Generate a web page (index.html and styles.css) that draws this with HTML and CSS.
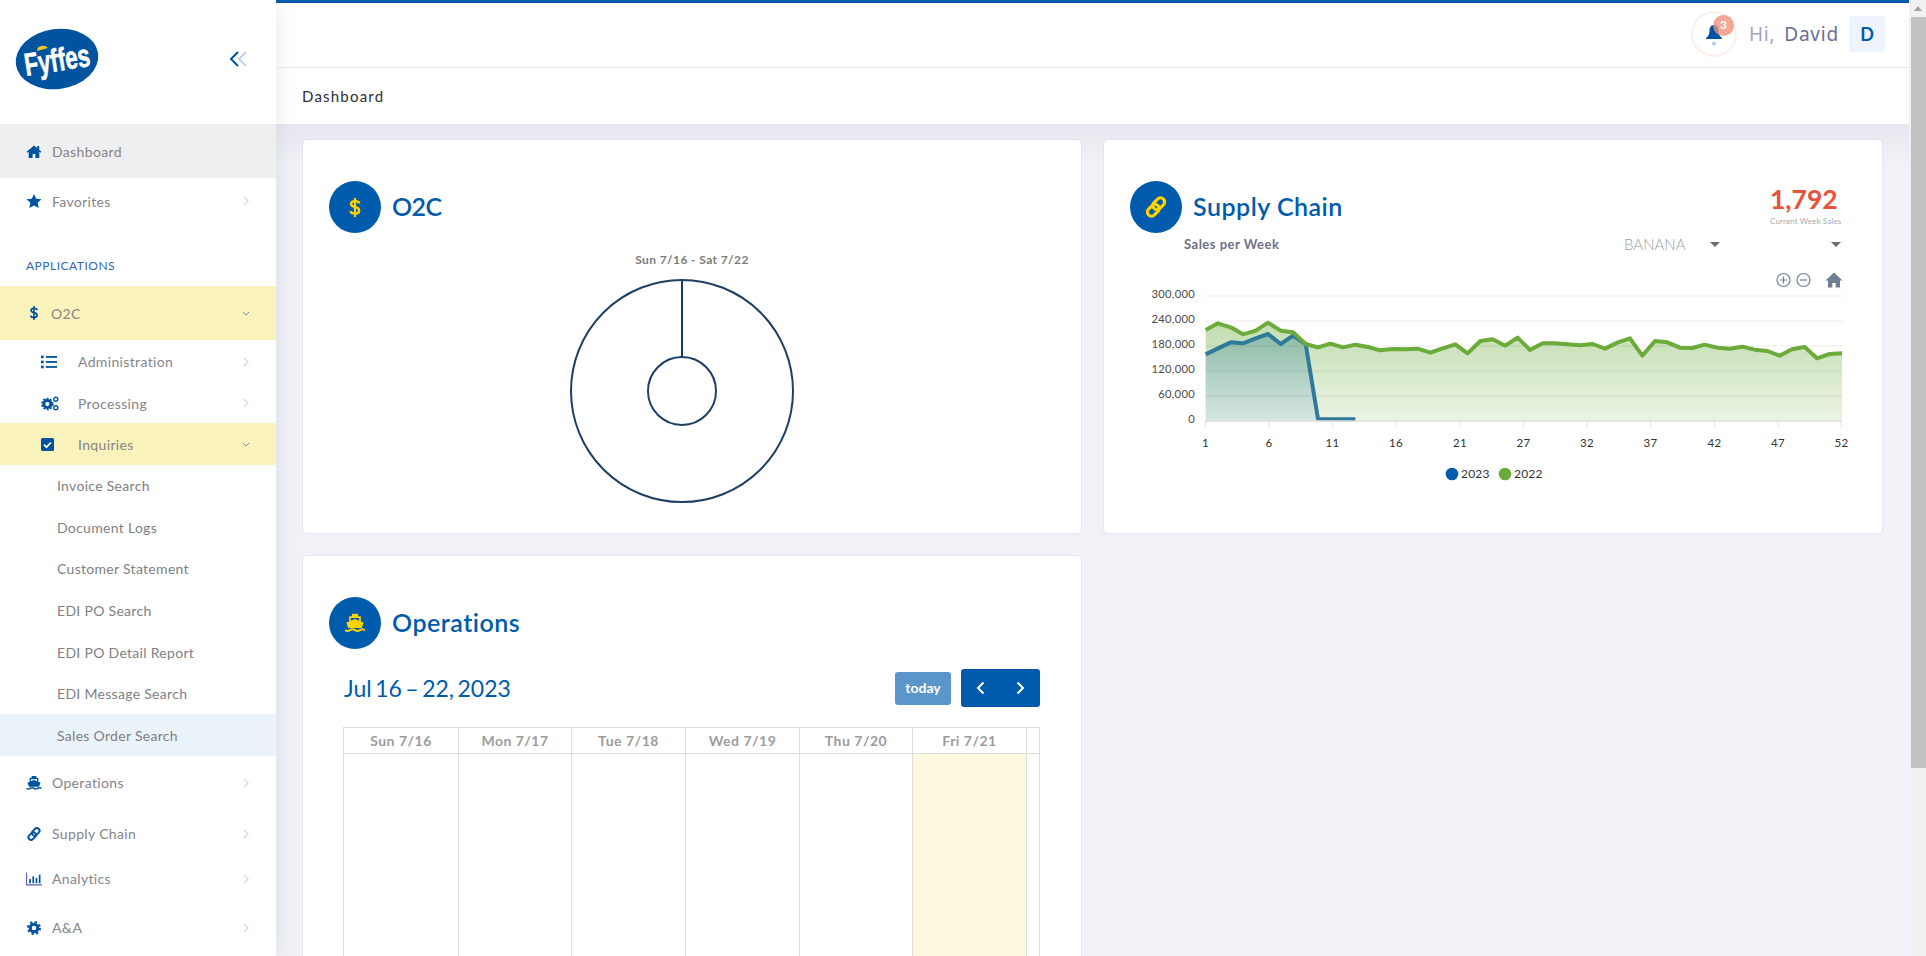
FILE: index.html
```html
<!DOCTYPE html>
<html lang="en">
<head>
<meta charset="utf-8">
<title>Dashboard</title>
<link rel="stylesheet" href="styles.css">
</head>
<body>
<svg class="defs" width="0" height="0" aria-hidden="true">
  <symbol id="i-home" viewBox="0 0 16 14"><path d="M8 .5 0 7.4l.9 1L2.3 7.3V14h4.2V9.6h3V14h4.2V7.3l1.4 1.1 .9-1L13.6 5.2V1.2h-2.2v2.1z" fill="currentColor"/></symbol>
  <symbol id="i-star" viewBox="0 0 16 15"><path d="M8 0l2.4 5 5.6.7-4.1 3.8 1.1 5.5L8 12.3 3 15l1.1-5.5L0 5.7 5.6 5z" fill="currentColor"/></symbol>
  <symbol id="i-link" viewBox="0 0 16 16"><g fill="none" stroke="currentColor" stroke-width="2.3"><rect x="-1.2" y="5" width="9.6" height="6" rx="3" transform="rotate(-45 3.6 8) translate(0 3.4)"/><rect x="7.6" y="5" width="9.6" height="6" rx="3" transform="rotate(-45 12.4 8) translate(0 -3.4)"/></g></symbol>
  <symbol id="i-ship" viewBox="0 0 16 15"><path d="M5.5 0h5v2h2.200v4.200L15 7.200 13.300 11.500H2.700L1 7.200l2.300-1V2h2.200zM4.700 3.400v2.200L8 4.300l3.300 1.300V3.400z" fill="currentColor"/><path d="M0 13.200q2 1.400 4 0t4 0 4 0 4 0" fill="none" stroke="currentColor" stroke-width="1.500"/></symbol>
  <symbol id="i-dollar" viewBox="0 0 10 16"><path d="M8.600 4.600C8.300 3.300 7 2.700 5 2.700 3 2.700 1.700 3.500 1.700 5 1.700 6.500 3 7 5 7.500c2.300.6 3.500 1.300 3.500 3 0 1.700-1.500 2.600-3.500 2.600S1.500 12.400 1.300 11" fill="none" stroke="currentColor" stroke-width="2"/><path d="M5 0v16" stroke="currentColor" stroke-width="1.800"/></symbol>
</svg>
<div class="app">
  <aside class="sidebar">
    <div class="brand">
      <svg class="logo" width="100" height="80" viewBox="-8 -8 100 80">
        <ellipse cx="42" cy="32" rx="41.500" ry="30" transform="rotate(-8 42 32)" fill="#00539f"/>
        <g transform="rotate(-9 42 32) translate(9 44) scale(.7 1)">
          <text class="logo-text" x="0" y="0">Fyffes</text>
        </g>
        <path d="M22 24a6 5 0 0 1 11-3z" fill="#f5c518"/>
      </svg>
      <svg class="collapse" width="18" height="16" viewBox="0 0 18 16">
        <path d="M9 1 2 8l7 7" fill="none" stroke="#00539f" stroke-width="2"/>
        <path d="M17 1 10 8l7 7" fill="none" stroke="#bcd2ea" stroke-width="2"/>
      </svg>
    </div>
    <nav class="nav">
      <a class="row row-dash is-grey"><svg class="ic ic-home"><use href="#i-home"/></svg><span>Dashboard</span></a>
      <a class="row row-fav"><svg class="ic ic-star"><use href="#i-star"/></svg><span>Favorites</span><svg class="chev" viewBox="0 0 8 10"><path d="M2 1l4 4-4 4"/></svg></a>
      <div class="section">APPLICATIONS</div>
      <a class="row row-o2c is-yellow"><svg class="ic ic-dollar"><use href="#i-dollar"/></svg><span>O2C</span><svg class="chev chev-down" viewBox="0 0 10 8"><path d="M1 2l4 4 4-4"/></svg></a>
      <a class="row sub row-admin">
        <svg class="ic" viewBox="0 0 15 12"><g fill="currentColor"><rect x="0" y="0" width="2.500" height="2.500"/><rect x="0" y="4.700" width="2.500" height="2.500"/><rect x="0" y="9.400" width="2.500" height="2.500"/><rect x="4.500" y=".4" width="10.500" height="1.700"/><rect x="4.500" y="5.100" width="10.500" height="1.700"/><rect x="4.500" y="9.800" width="10.500" height="1.700"/></g></svg>
        <span>Administration</span><svg class="chev" viewBox="0 0 8 10"><path d="M2 1l4 4-4 4"/></svg></a>
      <a class="row sub row-proc">
        <svg class="ic ic-cogs" viewBox="0 0 17 14"><g fill="none" stroke="currentColor"><circle cx="6" cy="7.500" r="3.400" stroke-width="2.800"/><circle cx="6" cy="7.500" r="5.200" stroke-width="1.400" stroke-dasharray="1.900 1.400"/><circle cx="14" cy="3" r="1.900" stroke-width="1.300"/><circle cx="14" cy="11" r="1.900" stroke-width="1.300"/></g></svg>
        <span>Processing</span><svg class="chev" viewBox="0 0 8 10"><path d="M2 1l4 4-4 4"/></svg></a>
      <a class="row sub row-inq is-yellow">
        <svg class="ic ic-check" viewBox="0 0 13 13"><rect width="13" height="13" rx="1.500" fill="currentColor"/><path d="M3 6.700l2.500 2.500L10 4.500" fill="none" stroke="#fff" stroke-width="1.800"/></svg>
        <span>Inquiries</span><svg class="chev chev-down" viewBox="0 0 10 8"><path d="M1 2l4 4 4-4"/></svg></a>
      <a class="leaf">Invoice Search</a>
      <a class="leaf">Document Logs</a>
      <a class="leaf">Customer Statement</a>
      <a class="leaf">EDI PO Search</a>
      <a class="leaf">EDI PO Detail Report</a>
      <a class="leaf">EDI Message Search</a>
      <a class="leaf is-active">Sales Order Search</a>
      <a class="row row-ops"><svg class="ic"><use href="#i-ship"/></svg><span>Operations</span><svg class="chev" viewBox="0 0 8 10"><path d="M2 1l4 4-4 4"/></svg></a>
      <a class="row row-sup"><svg class="ic"><use href="#i-link"/></svg><span>Supply Chain</span><svg class="chev" viewBox="0 0 8 10"><path d="M2 1l4 4-4 4"/></svg></a>
      <a class="row row-ana">
        <svg class="ic" viewBox="0 0 15 12"><path d="M.5 0v11.500H15" fill="none" stroke="#5a5fb0" stroke-width="1"/><g fill="currentColor"><rect x="3" y="6" width="1.600" height="4"/><rect x="6" y="3.500" width="1.600" height="6.500"/><rect x="9" y="5" width="1.600" height="5"/><rect x="12" y="2" width="1.600" height="8"/></g></svg>
        <span>Analytics</span><svg class="chev" viewBox="0 0 8 10"><path d="M2 1l4 4-4 4"/></svg></a>
      <a class="row row-aa">
        <svg class="ic" viewBox="0 0 14 14"><circle cx="7" cy="7" r="3.800" fill="none" stroke="currentColor" stroke-width="3"/><circle cx="7" cy="7" r="6" fill="none" stroke="currentColor" stroke-width="2" stroke-dasharray="2.400 2.300"/></svg>
        <span>A&amp;A</span><svg class="chev" viewBox="0 0 8 10"><path d="M2 1l4 4-4 4"/></svg></a>
    </nav>
  </aside>

  <div class="main">
    <header class="topbar">
      <div class="bell">
        <svg class="bell-icon" width="18" height="24" viewBox="0 0 18 24">
          <path d="M9 2C5.500 2 4.500 5 4.500 8c0 3.500-1.500 5.500-3.500 7v1h16v-1c-2-1.500-3.500-3.500-3.500-7C13.500 5 12.500 2 9 2z" fill="#00539f"/>
          <circle cx="9" cy="20.500" r="2" fill="#b5cdea"/>
        </svg>
        <span class="badge">3</span>
      </div>
      <div class="greeting"><span class="hi">Hi,</span> <span class="name">David</span></div>
      <div class="avatar">D</div>
    </header>
    <div class="crumbs">Dashboard</div>
    <div class="content">
      <section class="card card-o2c">
        <div class="head">
          <span class="disc"><svg class="disc-ic disc-dollar"><use href="#i-dollar"/></svg></span>
          <h2 class="h2-tight">O2C</h2>
        </div>
        <svg class="donut" width="727" height="262" viewBox="329 250 727 262">
          <text class="donut-title" x="692" y="264" text-anchor="middle">Sun 7/16 - Sat 7/22</text>
          <g fill="none" stroke="#1d3f66" stroke-width="2">
            <circle cx="682" cy="391" r="111"/>
            <circle cx="682" cy="391" r="34"/>
            <path d="M682 280v77"/>
          </g>
        </svg>
      </section>

      <section class="card card-sup">
        <div class="head head-sup">
          <span class="disc"><svg class="disc-ic disc-link"><use href="#i-link"/></svg></span>
          <h2>Supply Chain</h2>
          <div class="kpi">
            <div class="kpi-num">1,792</div>
            <div class="kpi-label">Current Week Sales</div>
          </div>
        </div>
        <div class="filters">
          <span class="filters-title">Sales per Week</span>
          <span class="select select-a">BANANA<i class="caret"></i></span>
          <i class="caret caret-b"></i>
        </div>
        <svg class="chart" width="778" height="222" viewBox="1104 265 778 222">
          <defs>
            <linearGradient id="gGreen" x1="0" y1="0" x2="0" y2="1">
              <stop offset="0" stop-color="#c2ddb0"/><stop offset="1" stop-color="#ebf4e4"/>
            </linearGradient>
            <linearGradient id="gBlue" x1="0" y1="0" x2="0" y2="1">
              <stop offset="0" stop-color="#2f7f90" stop-opacity=".38"/><stop offset="1" stop-color="#64a0c8" stop-opacity=".16"/>
            </linearGradient>
          </defs>
          <g class="tools">
            <circle cx="1783.500" cy="280" r="6.500"/><path d="M1780 280h7M1783.500 276.500v7"/>
            <circle cx="1803.500" cy="280" r="6.500"/><path d="M1800 280h7"/>
          </g>
          <path class="tool-home" d="M1834 272.500l-8.500 8h2.500v7h4.300v-4.500h3.400v4.500h4.300v-7h2.500z"/>
          <g transform="translate(1120 160) scale(.33333)">
            <path fill="url(#gGreen)" d="M257 510L294 490 332 502 369 523 407 512 444 488 482 512 519 517 557 552 594 562 631 551 669 562 706 554 744 561 781 571 819 567 856 568 893 566 931 578 968 565 1006 553 1043 580 1081 543 1118 538 1156 557 1193 533 1230 570 1268 550 1305 550 1343 553 1380 556 1418 552 1455 566 1492 548 1530 535 1567 587 1605 543 1642 547 1680 563 1717 564 1754 554 1792 563 1829 566 1867 560 1904 569 1942 573 1979 587 2016 568 2054 561 2091 595 2129 582 2166 580V785H257z"/>
            <path fill="url(#gBlue)" d="M257 583L294 565 332 547 369 550 407 535 444 522 482 552 519 527 557 552 594 777V785H257z"/>
          </g>
          <g class="grid-lines">
            <path d="M1205 296h637M1205 321h637M1205 346h637M1205 371h637M1205 396h637"/>
          </g>
          <g transform="translate(1120 160) scale(.33333)">
            <path class="line-blue" d="M257 583L294 565 332 547 369 550 407 535 444 522 482 552 519 527 557 552 594 777 631 778 669 778 706 778"/>
            <path class="line-green" d="M257 510L294 490 332 502 369 523 407 512 444 488 482 512 519 517 557 552 594 562 631 551 669 562 706 554 744 561 781 571 819 567 856 568 893 566 931 578 968 565 1006 553 1043 580 1081 543 1118 538 1156 557 1193 533 1230 570 1268 550 1305 550 1343 553 1380 556 1418 552 1455 566 1492 548 1530 535 1567 587 1605 543 1642 547 1680 563 1717 564 1754 554 1792 563 1829 566 1867 560 1904 569 1942 573 1979 587 2016 568 2054 561 2091 595 2129 582 2166 580"/>
          </g>
          <path class="axis" d="M1205 421h637"/>
          <path class="ticks" d="M1205.500 421v6M1269 421v6M1332.500 421v6M1396 421v6M1460 421v6M1523.500 421v6M1587 421v6M1650.500 421v6M1714.500 421v6M1778 421v6M1841.500 421v6"/>
          <g class="ylab">
            <text x="1195" y="298">300,000</text><text x="1195" y="323">240,000</text><text x="1195" y="348">180,000</text><text x="1195" y="373">120,000</text><text x="1195" y="398">60,000</text><text x="1195" y="423">0</text>
          </g>
          <g class="xlab">
            <text x="1205.500" y="447">1</text><text x="1269" y="447">6</text><text x="1332.500" y="447">11</text><text x="1396" y="447">16</text><text x="1460" y="447">21</text><text x="1523.500" y="447">27</text><text x="1587" y="447">32</text><text x="1650.500" y="447">37</text><text x="1714.500" y="447">42</text><text x="1778" y="447">47</text><text x="1841.500" y="447">52</text>
          </g>
          <circle cx="1452" cy="474" r="6.300" fill="#005bac"/><text class="leg" x="1461" y="478">2023</text>
          <circle cx="1505" cy="474" r="6.300" fill="#6aab3a"/><text class="leg" x="1514" y="478">2022</text>
        </svg>
      </section>

      <section class="card card-ops">
        <div class="head">
          <span class="disc"><svg class="disc-ic disc-ship"><use href="#i-ship"/></svg></span>
          <h2>Operations</h2>
        </div>
        <div class="cal">
          <div class="cal-bar">
            <div class="cal-range">Jul 16 – 22, 2023</div>
            <button class="btn-today">today</button>
            <div class="btn-nav">
              <svg width="10" height="14" viewBox="0 0 10 14"><path d="M7.500 1.500 2 7l5.500 5.500"/></svg>
              <svg width="10" height="14" viewBox="0 0 10 14"><path d="M2.500 1.500 8 7l-5.500 5.500"/></svg>
            </div>
          </div>
          <div class="cal-grid">
            <div class="th">Sun 7/16</div><div class="th">Mon 7/17</div><div class="th">Tue 7/18</div><div class="th">Wed 7/19</div><div class="th">Thu 7/20</div><div class="th">Fri 7/21</div><div class="th"></div>
            <div class="td"></div><div class="td"></div><div class="td"></div><div class="td"></div><div class="td"></div><div class="td is-today"></div><div class="td"></div>
          </div>
        </div>
      </section>
    </div>
  </div>

  <div class="scrollbar">
    <div class="sb-up"></div>
    <div class="sb-thumb"></div>
  </div>
</div>
</body>
</html>
```
FILE: styles.css
```css
* { box-sizing: border-box; }
html, body { margin: 0; height: 956px; overflow: hidden; }
body { font-family: Lato, "Open Sans", sans-serif; color: #85858a; background: #f0f2f7; }
.defs { position: absolute; }
.app { display: flex; height: 956px; overflow: hidden; }

/* sidebar */
.sidebar { width: 276px; flex: none; background: #fff; box-shadow: 0 0 24px rgba(70, 75, 120, .12); position: relative; z-index: 2; }
.brand { height: 124px; display: flex; align-items: flex-start; padding: 19px 0 0 7px; }
.logo { overflow: visible; }
.logo-text { font-family: "Liberation Sans", sans-serif; font-weight: 700; font-size: 32px; fill: #fff; stroke: #fff; stroke-width: .6px; }
.collapse { margin: 32px 0 0 122px; }
.nav { display: flex; flex-direction: column; }
.row { display: flex; align-items: center; padding-left: 26px; padding-right: 26px; font-size: 14px; letter-spacing: .35px; color: #85858a; }
.row > span { margin-left: 10px; }
.ic { width: 16px; height: 14px; flex: none; color: #00539f; }
.ic-home { height: 13px; }
.ic-dollar { height: 14px; }
.row-o2c > span { margin-left: 9px; }
.chev { width: 8px; height: 10px; margin-left: auto; fill: none; stroke: #cdd9f2; stroke-width: 1.200; }
.chev-down { width: 8px; height: 7px; stroke: #52749c; stroke-width: 1; }
.is-grey { background: #efefef; }
.is-yellow { background: #f9f3bb; }
.row-dash { height: 54px; }
.row-fav { height: 46px; }
.section { height: 62px; padding: 35px 0 0 26px; font-size: 12px; line-height: 14px; letter-spacing: .5px; color: #2f68ad; }
.row-o2c { height: 54px; }
.sub { padding-left: 41px; }
.sub > span { margin-left: 21px; }
.row-admin { height: 43px; }
.row-proc { height: 40px; }
.ic-cogs { width: 18px; height: 15px; }
.row-proc > span { margin-left: 19px; }
.ic-check { width: 13px; height: 13px; }
.row-inq > span { margin-left: 24px; }
.row-inq { height: 42px; }
.leaf { height: 41.570px; padding-left: 57px; display: flex; align-items: center; font-size: 14px; letter-spacing: .3px; color: #7f7f84; }
.is-active { background: #eaf3fa; }
.row-ops { height: 54px; }
.row-sup { height: 48px; }
.row-ana { height: 42px; }
.row-aa { height: 56px; }

/* main */
.main { flex: 1; min-width: 0; display: flex; flex-direction: column; }
.topbar { height: 68px; flex: none; background: #fff; border-top: 3px solid #005bac; border-bottom: 1px solid #ececf0; display: flex; align-items: center; justify-content: flex-end; padding: 0 24px 3px 0; }
.bell { width: 46px; height: 46px; border-radius: 50%; border: 2px solid #fdeeea; display: flex; align-items: center; justify-content: center; position: relative; margin-right: 12px; }
.bell-icon { margin-top: 3px; }
.badge { position: absolute; top: 2px; left: 20px; width: 21px; height: 21px; border-radius: 50%; background: rgba(240, 145, 120, .78); color: #fff; font-size: 12px; font-weight: 700; text-align: center; line-height: 19px; }
.greeting { font-size: 19px; letter-spacing: .8px; word-spacing: 3px; margin-right: 10px; font-family: "Noto Sans", sans-serif; }
.hi { color: #a0a5c3; }
.name { color: #696e96; }
.avatar { width: 36px; height: 36px; border-radius: 4px; background: #eef3fd; color: #005bac; font-weight: 700; font-size: 18px; display: flex; align-items: center; justify-content: center; }
.crumbs { height: 56px; flex: none; background: #fff; padding: 19px 0 0 26px; font-size: 15px; line-height: 18px; letter-spacing: 1.200px; color: #2f2f33; }
.content { flex: 1; min-height: 0; overflow: hidden; padding: 16px 0 0 27px; display: grid; grid-template-columns: 778px 778px; grid-template-rows: 393px 500px; column-gap: 23px; row-gap: 23px; background: linear-gradient(#e7e8ef, #f0f2f7 40px); }

/* cards */
.card { background: #fff; border-radius: 4px; box-shadow: 0 0 2px rgba(60, 70, 110, .18); padding: 41px 0 0 26px; overflow: hidden; }
.head { display: flex; align-items: center; height: 52px; }
.disc { width: 52px; height: 52px; border-radius: 50%; background: #005bac; display: flex; align-items: center; justify-content: center; flex: none; color: #ffd200; }
.disc-ic { display: block; }
.disc-dollar { width: 12px; height: 21px; }
.disc-link { width: 22px; height: 22px; }
.disc-ship { width: 20px; height: 20px; }
h2 { margin: -2px 0 0 11px; font-size: 25px; font-weight: 600; color: #005bac; letter-spacing: .5px; }
.h2-tight { letter-spacing: -.6px; }

.donut { display: block; margin-top: 17px; }
.donut-title { font-size: 12px; font-weight: 700; fill: #7c7c7c; letter-spacing: .4px; }

.kpi { margin-left: auto; width: 72px; margin-right: 40px; margin-top: -5px; }
.kpi-num { font-size: 26.500px; line-height: 30px; font-weight: 700; color: #e8523a; }
.kpi-label { font-size: 8px; line-height: 10px; color: #aaa; white-space: nowrap; margin-top: 2px; letter-spacing: .12px; }
.filters { height: 22px; display: flex; align-items: center; padding-left: 54px; padding-right: 40px; }
.filters-title { font-size: 13px; font-weight: 700; color: #6f6f86; letter-spacing: .5px; }
.select { margin-left: auto; font-size: 15px; font-weight: 300; color: #9e9e9e; width: 97px; display: flex; align-items: center; justify-content: space-between; margin-right: 110px; }
.caret { width: 0; height: 0; border-left: 5px solid transparent; border-right: 5px solid transparent; border-top: 5px solid #6c6c6c; display: block; }
.select .caret { margin-left: auto; margin-right: 1px; }
.caret-b { margin-right: 1px; }
.card-sup { position: relative; }
.chart { display: block; margin: 10px 0 0 -26px; }
.tools circle { fill: none; stroke: #6e7f96; stroke-width: 1.200; }
.tools path { stroke: #6e7f96; stroke-width: 1.200; fill: none; }
.tool-home { fill: #6e7f96; }
.grid-lines path { stroke: rgba(60, 70, 60, .1); stroke-width: 1; fill: none; }
.axis { stroke: #e0e0e0; stroke-width: 1.500; fill: none; }
.ticks { stroke: #e0e0e0; stroke-width: 1; fill: none; }
.line-green { fill: none; stroke: #6aab3a; stroke-width: 12; stroke-linejoin: round; }
.line-blue { fill: none; stroke: #2f7a9b; stroke-width: 12; stroke-linejoin: round; }
.ylab text { font-size: 11.200px; text-anchor: end; fill: #4a4a4a; letter-spacing: .3px; }
.xlab text { font-size: 11.500px; text-anchor: middle; fill: #333; letter-spacing: .3px; }
.leg { font-size: 12px; fill: #333; letter-spacing: .2px; }

/* calendar */
.cal { padding: 20px 41px 0 14px; }
.cal-bar { display: flex; align-items: center; height: 38px; }
.cal-range { font-size: 23px; word-spacing: -2.400px; color: #005bac; margin-right: auto; padding-left: 1px; }
.btn-today { width: 56px; height: 33px; border: 0; border-radius: 3px; background: #5b95c9; color: #fff; font-family: inherit; font-size: 14px; font-weight: 700; margin-right: 10px; padding: 0 0 2px; }
.btn-nav { width: 79px; height: 38px; border-radius: 3px; background: #005bac; display: flex; align-items: center; justify-content: space-between; padding: 0 15px; }
.btn-nav path { fill: none; stroke: #fff; stroke-width: 2; }
.cal-grid { margin-top: 20px; display: grid; grid-template-columns: 115px 113px 114px 114px 113px 114px 13px; grid-template-rows: 26px 400px; border-top: 1px solid #ddd; border-right: 1px solid #ddd; }
.th { border-left: 1px solid #ddd; border-bottom: 1px solid #ddd; text-align: center; font-size: 14px; font-weight: 700; line-height: 25px; color: #9c9c9c; letter-spacing: .5px; }
.td { border-left: 1px solid #ddd; }
.is-today { background: #fff8e1; }

/* scrollbar */
.scrollbar { width: 17px; flex: none; background: #f1f1f1; padding-top: 6px; position: relative; z-index: 3; }
.sb-up { width: 0; height: 0; margin: 0 auto; border-left: 4px solid transparent; border-right: 4px solid transparent; border-bottom: 5px solid #a3a3a3; }
.sb-thumb { height: 751px; margin: 6px 0 0 2px; background: #c1c1c1; }
```
